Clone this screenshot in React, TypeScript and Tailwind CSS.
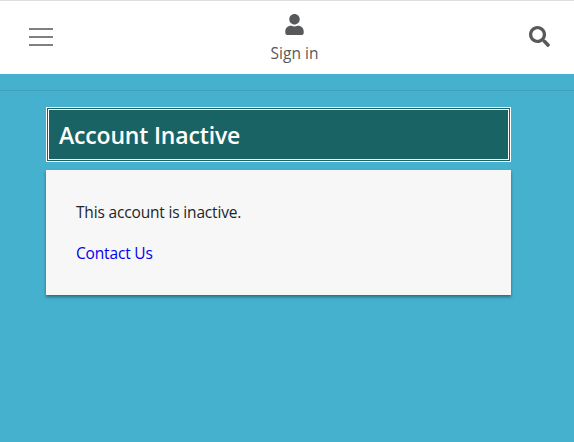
import { FaSearch, FaUser } from "react-icons/fa";

function Header() {
  return (
    <header className="flex h-[74px] items-start justify-between border-t border-[#dfdfdf] bg-white pr-6 pl-[29px] text-[#58595b]">
      <button aria-label="Menu" className="mt-[27px] flex w-6 flex-col gap-1.5">
        <span className="h-0.5 w-full bg-[#808080]" />
        <span className="h-0.5 w-full bg-[#808080]" />
        <span className="h-0.5 w-full bg-[#808080]" />
      </button>
      <a href="#" className="mt-[13px] ml-[7px] flex flex-col items-center">
        <FaUser size={21} />
        <span className="mt-1.5 text-[15.5px] leading-6">Sign in</span>
      </a>
      <button aria-label="Search" className="mt-[25px]">
        <FaSearch size={21} />
      </button>
    </header>
  );
}

export default function App() {
  return (
    <div className="min-h-screen bg-[#45b1cf] font-['Open_Sans','Noto_Sans',sans-serif]">
      <Header />
      <div className="h-[17px] border-b border-[#3e9fba]" />
      <main className="mt-4 ml-[46px] w-[465px]">
        <h1 className="flex h-[55px] items-center border-[3px] border-double border-white bg-[#1a6365] pt-px pl-2.5 text-[23px] font-semibold tracking-[-0.17px] text-white">
          Account Inactive
        </h1>
        <section className="mt-2 h-[125px] bg-[#f7f7f7] px-[30px] pt-[30px] text-[15.5px] leading-6 tracking-[-0.17px] text-[#212529] shadow-[0_2px_3px_rgba(0,0,0,0.4)]">
          <p>This account is inactive.</p>
          <p className="mt-[17px]">
            <a href="#" className="text-[#0000ee]">Contact Us</a>
          </p>
        </section>
      </main>
    </div>
  );
}
